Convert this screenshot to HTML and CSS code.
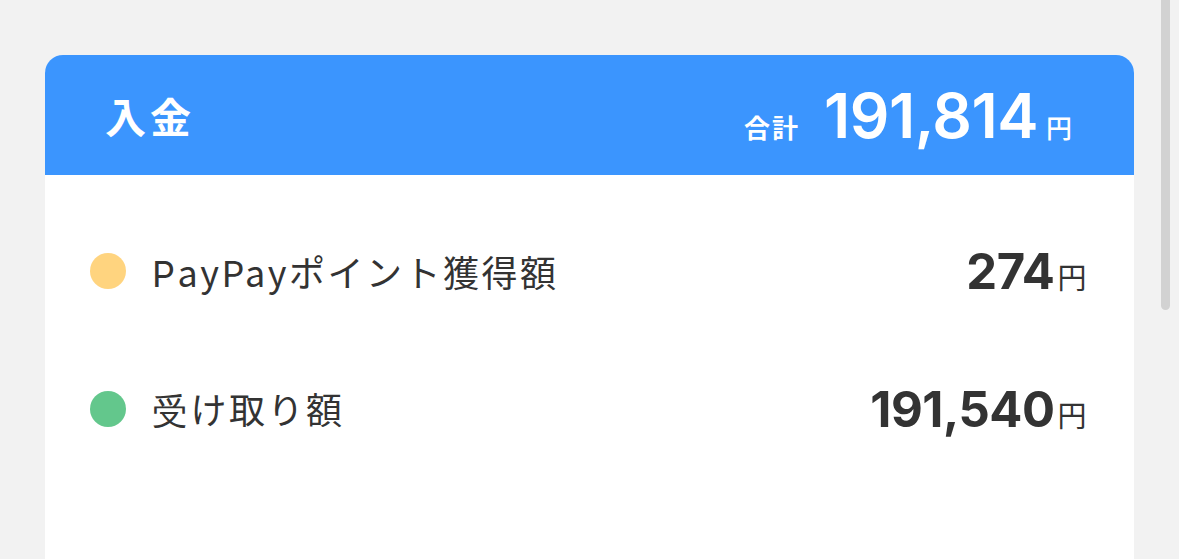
FILE: index.html
```html
<!DOCTYPE html>
<html lang="ja">
<head>
    <meta charset="UTF-8">
    <meta name="viewport" content="width=device-width, initial-scale=1.0">
    <title>入金</title>
    <link rel="stylesheet" href="styles.css">
</head>
<body>
    <div class="card">
        <div class="card-header">
            <h2 class="title">入金</h2>
            <div class="total">
                <span class="total-label">合計</span>
                <span class="total-value">191,814</span>
                <span class="total-unit">円</span>
            </div>
        </div>

        <div class="card-body">
            <div class="row">
                <span class="dot dot-point"></span>
                <span class="row-label">PayPayポイント獲得額</span>
                <span class="row-value">274<span class="unit">円</span></span>
            </div>
            <div class="row">
                <span class="dot dot-received"></span>
                <span class="row-label">受け取り額</span>
                <span class="row-value">191,540<span class="unit">円</span></span>
            </div>
        </div>
    </div>

    <div class="scroll-thumb"></div>
</body>
</html>
```

FILE: styles.css
```css
body {
    font-family: Inter, "Noto Sans CJK JP", sans-serif;
    background: #f2f2f2;
    color: #333333;
    margin: 0;
    padding: 55px 0 0 45px;
    height: 559px;
    box-sizing: border-box;
    overflow: hidden;
}
.card {
    width: 1089px;
    min-height: 504px;
    background: #ffffff;
    border-radius: 18px 18px 0 0;
    overflow: hidden;
}
.card-header {
    height: 120px;
    background: #3b95fe;
    color: #ffffff;
    display: flex;
    align-items: center;
    justify-content: space-between;
    padding: 0 62px 0 60px;
}
.title {
    margin: 0;
    font-size: 41px;
    font-weight: 700;
    font-family: "Noto Sans CJK JP", sans-serif;
    letter-spacing: 4px;
}
.total {
    display: flex;
    align-items: baseline;
}
.total-label {
    font-family: "Noto Sans CJK JP", sans-serif;
    font-size: 26px;
    font-weight: 700;
    letter-spacing: 2px;
    margin-right: 24px;
}
.total-value {
    font-size: 62px;
    font-weight: 600;
    letter-spacing: -0.5px;
}
.total-unit {
    font-family: "Noto Sans CJK JP", sans-serif;
    font-size: 26px;
    font-weight: 500;
    margin-left: 8px;
}
.card-body {
    padding: 27px 48px 0 45px;
}
.row {
    height: 138px;
    display: flex;
    align-items: center;
}
.dot {
    width: 36px;
    height: 36px;
    border-radius: 50%;
    margin-right: 26px;
}
.dot-point { background: #ffd47f; }
.dot-received { background: #63c78c; }
.row-label {
    flex: 1;
    font-size: 36px;
    font-family: "Noto Sans CJK JP", sans-serif;
    letter-spacing: 2.5px;
}
.row-label:first-letter { font-family: Inter, sans-serif; }
.row-value {
    font-size: 49px;
    font-weight: 700;
    letter-spacing: -0.5px;
}
.unit {
    font-family: "Noto Sans CJK JP", sans-serif;
    font-size: 29px;
    font-weight: 400;
    margin-left: 3px;
}
.scroll-thumb {
    position: fixed;
    top: -10px;
    left: 1161px;
    width: 9px;
    height: 320px;
    border-radius: 5px;
    background: #d2d2d2;
}
```
